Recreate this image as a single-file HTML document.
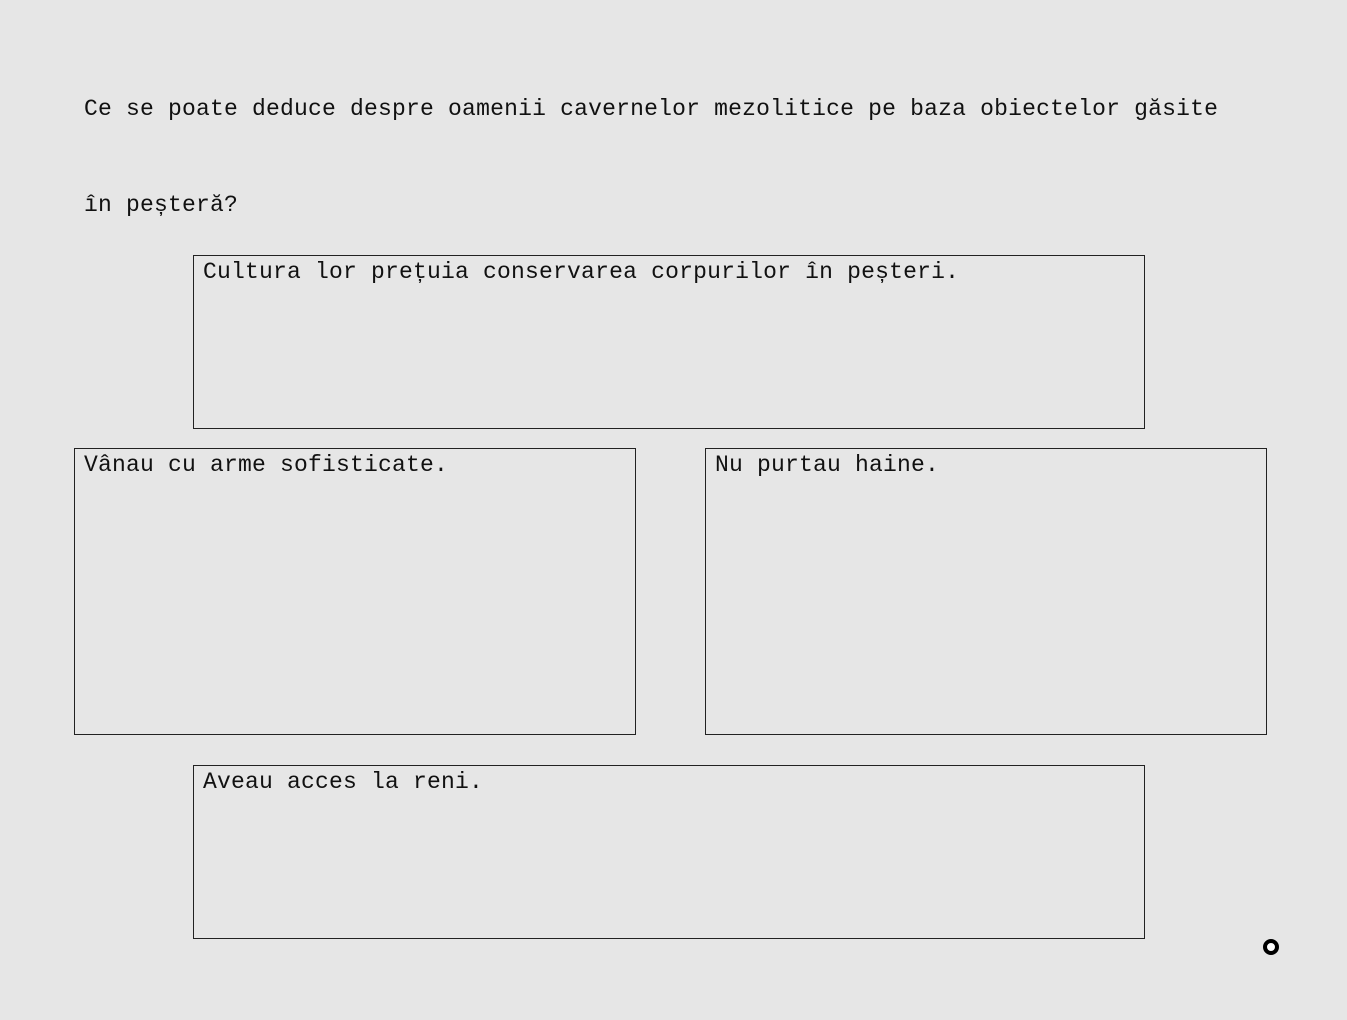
<!DOCTYPE html>
<html><head><meta charset="utf-8"><style>
html,body{margin:0;padding:0;background:#e6e6e6;width:1347px;height:1020px;overflow:hidden;position:relative}
body{font-family:"Liberation Mono",monospace;color:#111;font-size:23px}
.q{position:absolute;left:84px;top:61px;line-height:96px;letter-spacing:0.2px;white-space:nowrap}
.b{position:absolute;border:1px solid #222;box-sizing:border-box;padding:1px 0 0 9px;line-height:30px;white-space:nowrap;letter-spacing:0.2px}
.c{position:absolute;left:1263px;top:939px;width:16px;height:16px;border:4px solid #000;border-radius:50%;box-sizing:border-box;background:#fff}
</style></head><body>
<div class="q">Ce se poate deduce despre oamenii cavernelor mezolitice pe baza obiectelor găsite<br>în peșteră?</div>
<div class="b" style="left:193px;top:255px;width:952px;height:174px">Cultura lor prețuia conservarea corpurilor în peșteri.</div>
<div class="b" style="left:74px;top:448px;width:562px;height:287px">Vânau cu arme sofisticate.</div>
<div class="b" style="left:705px;top:448px;width:562px;height:287px">Nu purtau haine.</div>
<div class="b" style="left:193px;top:765px;width:952px;height:174px">Aveau acces la reni.</div>
<div class="c"></div>
</body></html>
